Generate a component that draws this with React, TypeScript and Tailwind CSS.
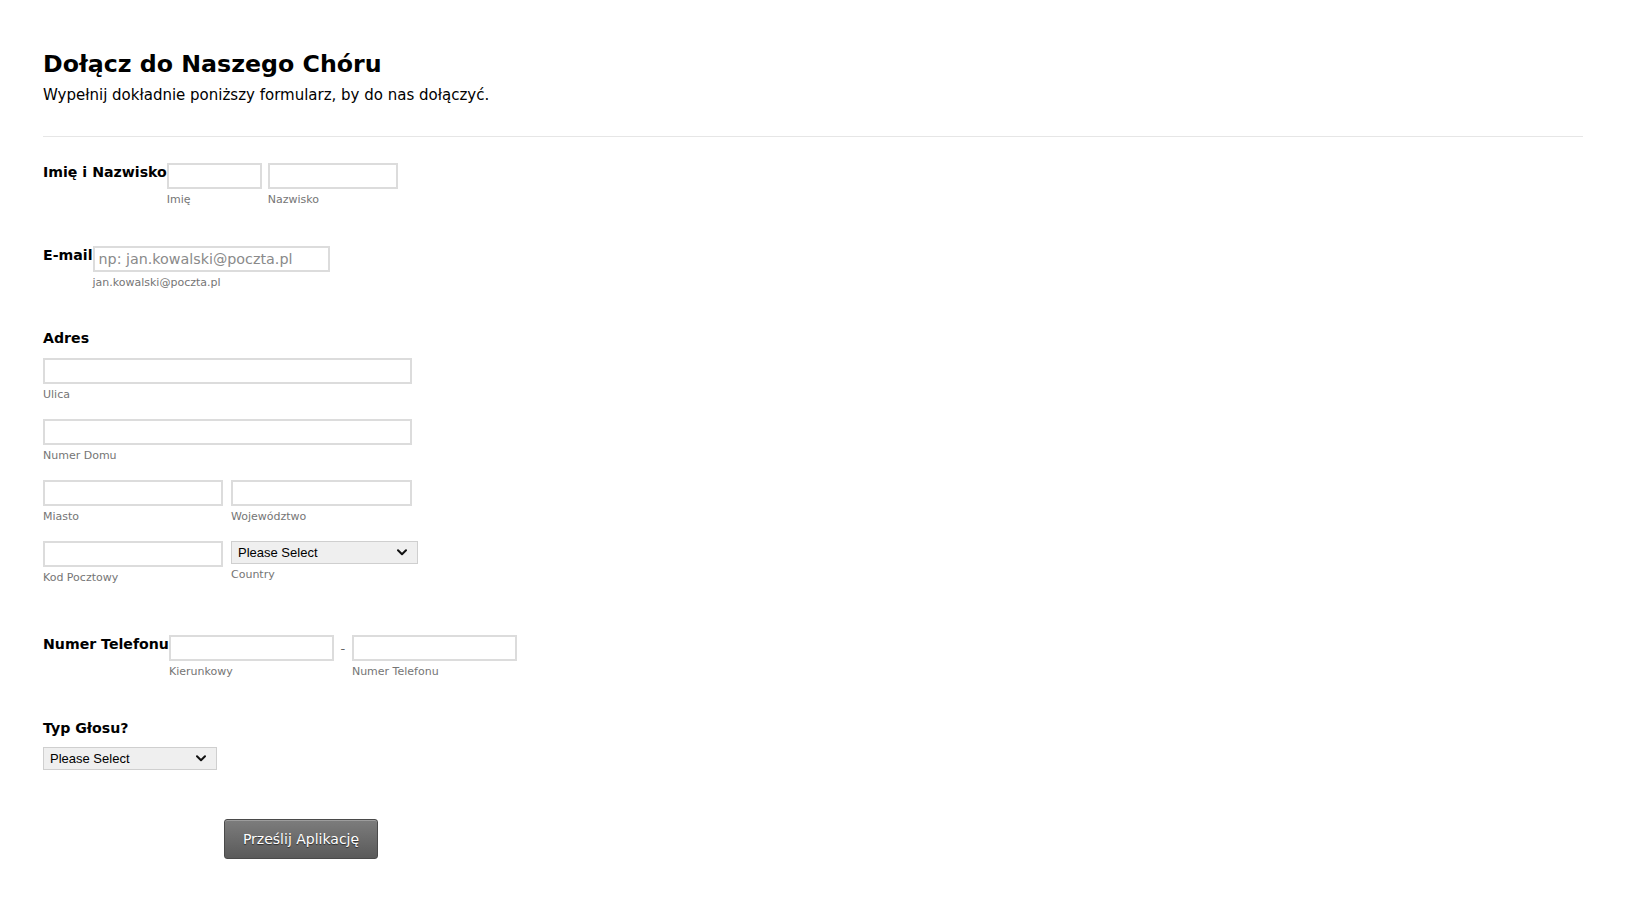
import type { ReactNode } from 'react';

const inputCls =
  'block h-[26px] border-2 border-[#dcdcdc] bg-white px-1 text-[14.3px] text-black outline-none placeholder:text-[#8a8a8a]';

function Sub({ children }: { children: ReactNode }) {
  return <span className="mt-[4px] block text-[11px] leading-[14px] text-[#757575]">{children}</span>;
}

function Label({ children }: { children: ReactNode }) {
  return <label className="block whitespace-nowrap text-[14.15px] font-bold leading-[18px] text-black">{children}</label>;
}

function Field({ width, sub, placeholder }: { width: string; sub: string; placeholder?: string }) {
  return (
    <div className="flex flex-col">
      <input className={`${inputCls} ${width}`} placeholder={placeholder} />
      <Sub>{sub}</Sub>
    </div>
  );
}

function Select({ width }: { width: string }) {
  return (
    <div className={`relative h-[23px] ${width}`}>
      <select className="block h-full w-full appearance-none border border-[#cfcfcf] bg-[#efefef] pl-[6px] font-['Liberation_Sans',Arial,sans-serif] text-[13px] text-black outline-none">
        <option>Please Select</option>
      </select>
      <svg
        className="pointer-events-none absolute right-[11px] top-[8px]"
        width="10"
        height="7"
        viewBox="0 0 10 7"
        fill="none"
      >
        <path d="M1 1.2l4 4 4-4" stroke="#111" strokeWidth="2" strokeLinecap="round" strokeLinejoin="round" />
      </svg>
    </div>
  );
}

export default function App() {
  return (
    <div className="min-h-screen bg-white pl-[43px] pr-[45px] pt-[50px] font-['DejaVu_Sans',Verdana,sans-serif] text-black">
      <h1 className="text-[23.7px] font-bold leading-[28px]">Dołącz do Naszego Chóru</h1>
      <p className="mt-[8px] text-[15px] leading-[19px]">Wypełnij dokładnie poniższy formularz, by do nas dołączyć.</p>
      <div className="mt-[31px] h-px bg-[#e6e6e6]" />

      {/* Imię i Nazwisko */}
      <div className="mt-[26px] flex items-start">
        <Label>Imię i Nazwisko</Label>
        <div className="flex gap-[6px]">
          <Field width="w-[95px]" sub="Imię" />
          <Field width="w-[130px]" sub="Nazwisko" />
        </div>
      </div>

      {/* E-mail */}
      <div className="mt-[39px] flex items-start">
        <Label>E-mail</Label>
        <Field width="w-[237px]" sub="jan.kowalski@poczta.pl" placeholder="np: jan.kowalski@poczta.pl" />
      </div>

      {/* Adres */}
      <div className="mt-[39px]">
        <Label>Adres</Label>
        <div className="mt-[11px] flex flex-col gap-[17px]">
          <Field width="w-[369px]" sub="Ulica" />
          <Field width="w-[369px]" sub="Numer Domu" />
          <div className="flex gap-[8px]">
            <Field width="w-[180px]" sub="Miasto" />
            <Field width="w-[181px]" sub="Województwo" />
          </div>
          <div className="flex items-start gap-[8px]">
            <Field width="w-[180px]" sub="Kod Pocztowy" />
            <div className="flex flex-col">
              <Select width="w-[187px]" />
              <Sub>Country</Sub>
            </div>
          </div>
        </div>
      </div>

      {/* Numer Telefonu */}
      <div className="mt-[50px] flex items-start">
        <Label>Numer Telefonu</Label>
        <div className="flex items-start">
          <Field width="w-[165px]" sub="Kierunkowy" />
          <span className="w-[18px] pt-[5px] text-center text-[13px] leading-[18px] text-[#666]">-</span>
          <Field width="w-[165px]" sub="Numer Telefonu" />
        </div>
      </div>

      {/* Typ Głosu */}
      <div className="mt-[40px]">
        <Label>Typ Głosu?</Label>
        <div className="mt-[10px]">
          <Select width="w-[174px]" />
        </div>
      </div>

      <div className="ml-[181px] mt-[49px] pb-[39px]">
        <button className="h-[40px] w-[154px] rounded-[3px] border border-[#4a4a4a] bg-gradient-to-b from-[#7d7d7d] to-[#5a5a5a] text-[14px] text-white shadow-[inset_0_1px_0_rgba(255,255,255,0.25)] [text-shadow:0_1px_1px_rgba(0,0,0,0.6)]">
          Prześlij Aplikację
        </button>
      </div>
    </div>
  );
}
